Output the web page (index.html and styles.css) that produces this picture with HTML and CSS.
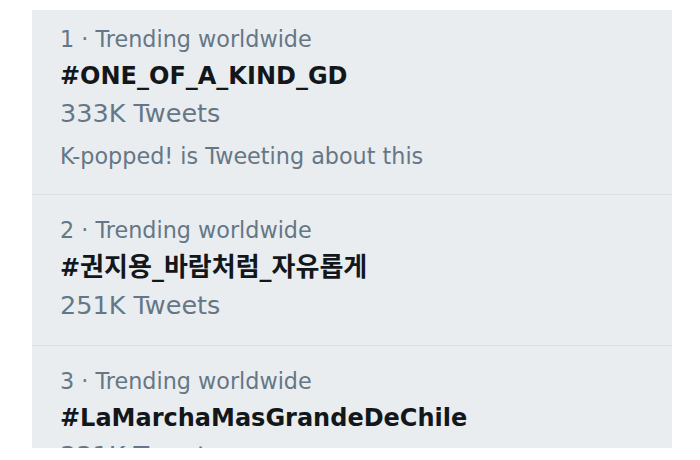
FILE: index.html
```html
<!DOCTYPE html>
<html lang="en">

<head>
	<meta charset="UTF-8">
	<title>Trends</title>

	<link rel="stylesheet" href="styles.css">
</head>

<body>
	<section class="trends">
		<div class="trend">
			<p class="trend-meta">1 · Trending worldwide</p>
			<p class="trend-name">#ONE_OF_A_KIND_GD</p>
			<p class="trend-count">333K Tweets</p>
			<p class="trend-context">K-popped! is Tweeting about this</p>
		</div>
		<div class="trend">
			<p class="trend-meta">2 · Trending worldwide</p>
			<p class="trend-name">#<span class="ko">권지용</span>_<span class="ko">바람처럼</span>_<span class="ko">자유롭게</span></p>
			<p class="trend-count">251K Tweets</p>
		</div>
		<div class="trend">
			<p class="trend-meta">3 · Trending worldwide</p>
			<p class="trend-name">#LaMarchaMasGrandeDeChile</p>
			<p class="trend-count">331K Tweets</p>
		</div>
	</section>
</body>

</html>
```

FILE: styles.css
```css
html {
	font-family: "DejaVu Sans", "Noto Sans CJK KR", sans-serif;
	font-size: 16px;
}

body {
	margin: 0;
	padding: 10px 28px 0 32px;
	background-color: #FFF;
}

p {
	margin: 0;
}

/* el panel queda cortado abajo, igual que en la captura */
.trends {
	height: 438px;
	overflow: hidden;
	background-color: #E9EDF0;
}

.trend {
	padding: 17px 28px 21px;
	border-bottom: 1px solid #DCE0E4;
}

.trend:first-child {
	padding-top: 11px;
	padding-bottom: 19px;
}

.trend-meta,
.trend-context {
	font-size: 22.3px;
	line-height: 37px;
	color: #657786;
}

.trend-name {
	font-size: 24px;
	font-weight: bold;
	line-height: 37px;
	color: #14171A;
}

.ko {
	font-size: 26px;
}

.trend-count {
	font-size: 25.5px;
	line-height: 37px;
	color: #657786;
}

.trend-context {
	margin-top: 6px;
}
```
